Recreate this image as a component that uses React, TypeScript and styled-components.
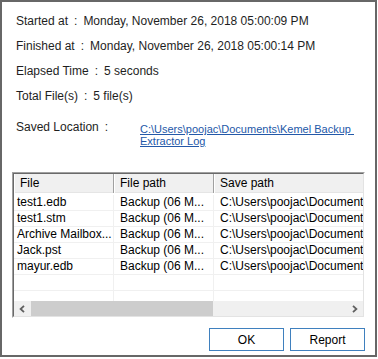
import React, { type FC } from 'react'
import styled, { createGlobalStyle } from 'styled-components'

const GlobalStyle = createGlobalStyle`
  body {
    margin: 0;
    background: #ffffff;
    font-family: 'Liberation Sans', Arial, sans-serif;
  }
`

interface FileRow {
  file: string
  path: string
  save: string
}

const SAVE_PATH = 'C:\\Users\\poojac\\Documents\\Kernel Backup Extractor Log'

const rows: FileRow[] = [
  { file: 'test1.edb', path: 'Backup (06 M...', save: SAVE_PATH },
  { file: 'test1.stm', path: 'Backup (06 M...', save: SAVE_PATH },
  { file: 'Archive Mailbox...', path: 'Backup (06 M...', save: SAVE_PATH },
  { file: 'Jack.pst', path: 'Backup (06 M...', save: SAVE_PATH },
  { file: 'mayur.edb', path: 'Backup (06 M...', save: SAVE_PATH },
  { file: '', path: '', save: '' },
  { file: '', path: '', save: '' },
]

const summary = [
  { label: 'Started at', value: 'Monday, November 26, 2018 05:00:09 PM' },
  { label: 'Finished at', value: 'Monday, November 26, 2018 05:00:14 PM' },
  { label: 'Elapsed Time', value: '5 seconds' },
  { label: 'Total File(s)', value: '5 file(s)' },
]

const Window = styled.div`
  box-sizing: border-box;
  width: 377px;
  height: 357px;
  border: 2px solid #676767;
  background: #ffffff;
  display: flex;
  flex-direction: column;
  padding: 12px 10px 0 10px;
`

const Info = styled.div`
  display: flex;
  flex-direction: column;
  gap: 11px;
  padding-left: 4px;
`

const InfoRow = styled.div`
  font-size: 12px;
  line-height: 14px;
  color: #1e1e1e;
  white-space: nowrap;
`

const Colon = styled.span`
  margin: 0 6px;
`

const SavedRow = styled.div`
  display: grid;
  grid-template-columns: 124px 1fr;
  margin-top: 17px;
  padding-left: 4px;
`

const SavedLabel = styled.div`
  font-size: 12px;
  line-height: 14px;
  color: #1e1e1e;
  white-space: nowrap;
`

const PathLink = styled.a`
  display: block;
  margin-top: 3px;
  font-size: 11px;
  line-height: 12px;
  color: #2358a8;
  text-decoration: underline;
  white-space: pre-wrap;
  cursor: pointer;
`

const Frame = styled.div`
  margin-top: 25px;
  border: 1px solid;
  border-color: #a0a0a0 #ffffff #ffffff #a0a0a0;
`

const FrameInner = styled.div`
  border: 1px solid;
  border-color: #696969 #e3e3e3 #e3e3e3 #696969;
  overflow: hidden;
`

const Header = styled.div`
  display: grid;
  grid-template-columns: 100px 100px 200px;
  height: 19px;
  box-sizing: border-box;
  border-bottom: 1px solid #e5e5e5;
  background: #f0f0f0;
`

const HeaderCell = styled.div`
  box-sizing: border-box;
  padding-left: 6px;
  font-size: 12px;
  line-height: 19px;
  color: #000000;
  border-right: 1px solid #a0a0a0;
  box-shadow: inset 1px 0 0 #ffffff;
  white-space: nowrap;
`

const Body = styled.div`
  height: 108px;
  box-sizing: border-box;
  padding-top: 2px;
  overflow: hidden;
  background: #ffffff;
`

const Row = styled.div`
  display: grid;
  grid-template-columns: 100px 100px 200px;
  height: 16px;
  box-sizing: border-box;
  border-bottom: 1px solid #f0f0f0;
`

const Cell = styled.div<{ $first?: boolean }>`
  box-sizing: border-box;
  padding-left: ${({ $first }) => ($first ? '3px' : '6px')};
  font-size: 12px;
  line-height: 15px;
  color: #000000;
  border-right: 1px solid #f0f0f0;
  white-space: nowrap;
  overflow: hidden;
`

const ScrollBar = styled.div`
  display: flex;
  height: 15px;
  background: #f0f0f0;
`

const ArrowButton = styled.div`
  width: 17px;
  display: flex;
  align-items: center;
  justify-content: center;
  background: #f0f0f0;
`

const Thumb = styled.div`
  width: 182px;
  background: #cdcdcd;
`

const Track = styled.div`
  flex: 1;
  background: #f0f0f0;
`

const Buttons = styled.div`
  display: flex;
  justify-content: flex-end;
  gap: 6px;
  margin-top: 10px;
`

const Button = styled.button`
  width: 75px;
  height: 23px;
  padding: 0;
  border: 1px solid #3f80be;
  background: #ffffff;
  font-family: 'Liberation Sans', Arial, sans-serif;
  font-size: 12px;
  color: #000000;
`

const Chevron: FC<{ dir: 'left' | 'right' }> = ({ dir }) => (
  <svg width='7' height='8' viewBox='0 0 7 8'>
    <polyline
      points={dir === 'left' ? '5,0.8 1.6,4 5,7.2' : '2,0.8 5.4,4 2,7.2'}
      fill='none'
      stroke='#606060'
      strokeWidth='1.8'
    />
  </svg>
)

const App: FC = () => {
  return (
    <>
      <GlobalStyle />
      <Window>
        <Info>
          {summary.map((item) => (
            <InfoRow key={item.label}>
              {item.label}
              <Colon>:</Colon>
              {item.value}
            </InfoRow>
          ))}
        </Info>

        <SavedRow>
          <SavedLabel>
            Saved Location
            <Colon>:</Colon>
          </SavedLabel>
          <PathLink>{'C:\\Users\\poojac\\Documents\\Kemel Backup Extractor Log'}</PathLink>
        </SavedRow>

        <Frame>
          <FrameInner>
            <Header>
              <HeaderCell>File</HeaderCell>
              <HeaderCell>File path</HeaderCell>
              <HeaderCell>Save path</HeaderCell>
            </Header>
            <Body>
              {rows.map((row, i) => (
                <Row key={i}>
                  <Cell $first>{row.file}</Cell>
                  <Cell>{row.path}</Cell>
                  <Cell>{row.save}</Cell>
                </Row>
              ))}
            </Body>
            <ScrollBar>
              <ArrowButton>
                <Chevron dir='left' />
              </ArrowButton>
              <Thumb />
              <Track />
              <ArrowButton>
                <Chevron dir='right' />
              </ArrowButton>
            </ScrollBar>
          </FrameInner>
        </Frame>

        <Buttons>
          <Button>OK</Button>
          <Button>Report</Button>
        </Buttons>
      </Window>
    </>
  )
}

export default App
